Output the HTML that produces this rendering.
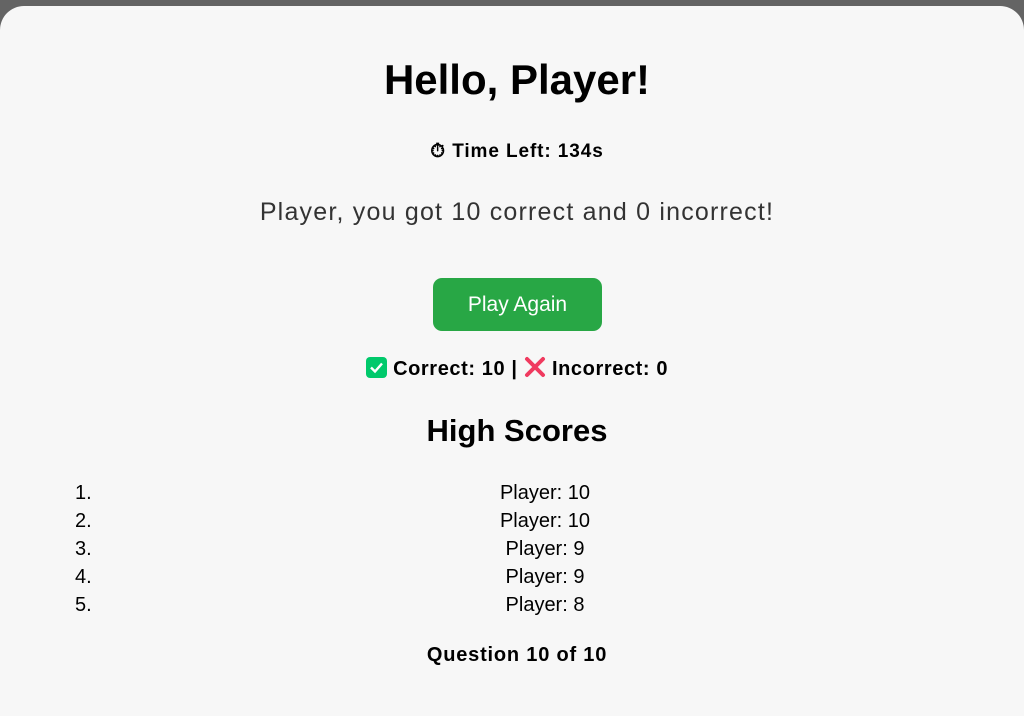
<!DOCTYPE html>
<html><head><style>
html,body{margin:0;padding:0;width:1024px;height:697px;background:#646464;overflow:hidden;font-family:"Liberation Sans",sans-serif;color:#000}
.card{position:absolute;top:6px;left:0;width:1024px;height:710px;background:#f7f7f7;border-radius:24px 24px 0 0}
.c{position:absolute;left:10px;width:1014px;text-align:center;white-space:nowrap}
.btn{position:absolute;left:433px;top:278px;width:169px;height:53px;background:#28a745;border-radius:9px;color:#fff;font-size:21px;line-height:53px;text-align:center}
.li{position:absolute;font-size:20px;line-height:28px}
</style></head><body>
<div class="card"></div>
<div class="c" style="top:55px;font-size:42px;font-weight:bold;line-height:50px">Hello, Player!</div>
<div class="c" style="top:140px;font-size:19px;font-weight:bold;line-height:24px;letter-spacing:0.9px">⏱ Time Left: 134s</div>
<div class="c" style="top:197px;font-size:25px;color:#333;line-height:30px;letter-spacing:1.2px">Player, you got 10 correct and 0 incorrect!</div>
<div class="btn">Play Again</div>
<div class="c" style="top:356px;font-size:20px;font-weight:bold;line-height:24px;letter-spacing:0.6px"><span style="display:inline-block;width:21px;height:21px;background:#00c96b;border-radius:4px;vertical-align:-3px;position:relative"><svg width="21" height="21" viewBox="0 0 21 21" style="position:absolute;left:0;top:0"><path d="M5 10.5l4 4 7-8" stroke="#fff" stroke-width="2.4" fill="none"/></svg></span> Correct: 10 | <svg width="22" height="22" viewBox="0 0 22 22" style="vertical-align:-3px"><path d="M3 3L19 19M19 3L3 19" stroke="#f03a5f" stroke-width="4" stroke-linecap="round"/></svg> Incorrect: 0</div>
<div class="c" style="top:412px;font-size:31px;font-weight:bold;line-height:38px">High Scores</div>
<div class="li" style="left:75px;top:479px">1.<br>2.<br>3.<br>4.<br>5.</div>
<div class="c li" style="left:76px;width:938px;top:479px">Player: 10<br>Player: 10<br>Player: 9<br>Player: 9<br>Player: 8</div>
<div class="c" style="top:643px;font-size:20px;font-weight:bold;line-height:24px;letter-spacing:0.8px">Question 10 of 10</div>
</body></html>
